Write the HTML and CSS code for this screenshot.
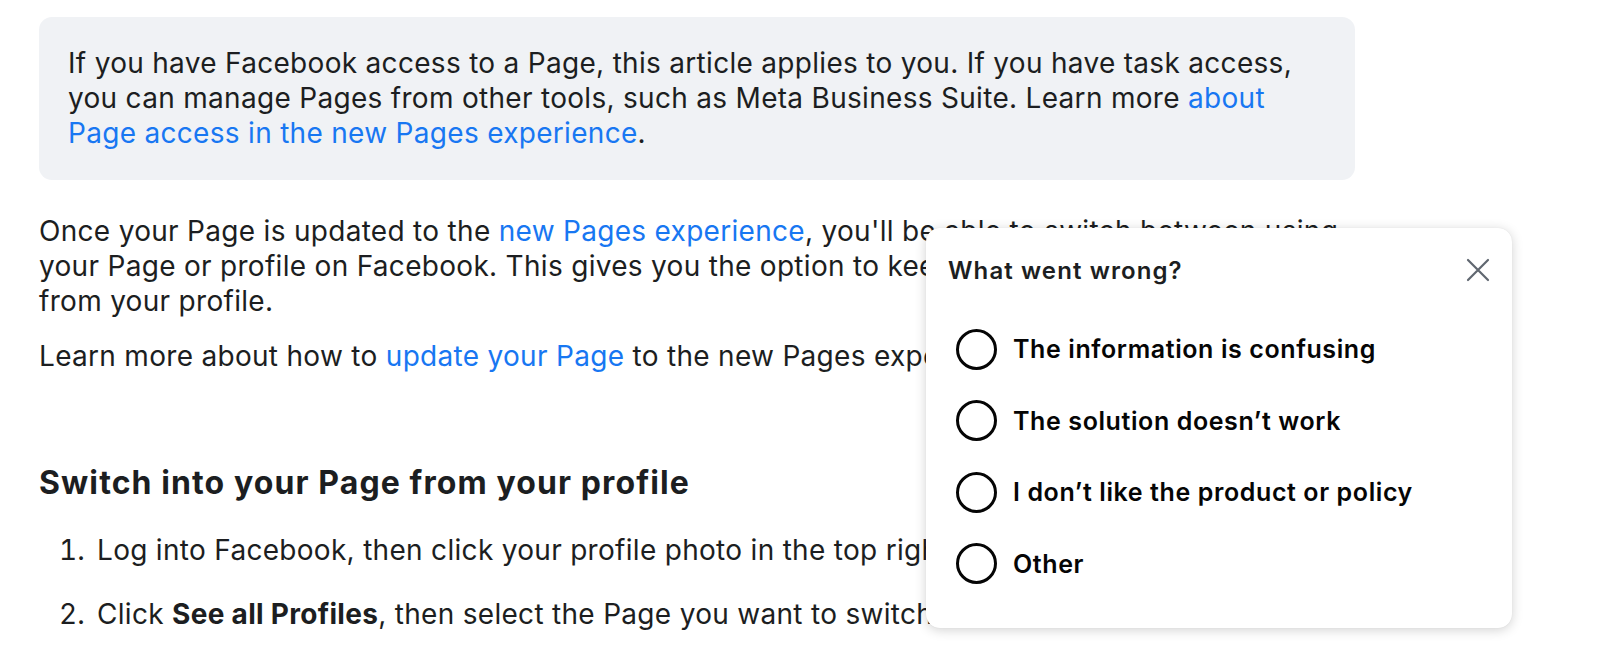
FILE: index.html
```html
<!DOCTYPE html>
<html>
<head>
<meta charset="utf-8">
<link rel="stylesheet" href="styles.css">
</head>
<body>
<main class="article">
  <div class="note">
    <p>If you have Facebook access to a Page, this article applies to you. If you have task access, you can manage Pages from other tools, such as Meta Business Suite. Learn more <a href="#">about Page access in the new Pages experience</a>.</p>
  </div>
  <p class="para">Once your Page is updated to the <a href="#">new Pages experience</a>, you'll be able to switch between using your Page or profile on Facebook. This gives you the option to keep your Page activity separate from your profile.</p>
  <p class="para">Learn more about how to <a href="#">update your Page</a> to the new Pages experience.</p>
  <h2 class="heading">Switch into your Page from your profile</h2>
  <ol class="steps">
    <li>Log into Facebook, then click your profile photo in the top right.</li>
    <li>Click <b>See all Profiles</b>, then select the Page you want to switch into.</li>
  </ol>
</main>
<div class="popup">
  <div class="popup-head">
    <span class="popup-title">What went wrong?</span>
    <svg class="close" width="26" height="26" viewBox="0 0 26 26"><path d="M3 3L23 23M23 3L3 23" stroke="#606770" stroke-width="2.2" stroke-linecap="round" fill="none"/></svg>
  </div>
  <ul class="options">
    <li class="option"><span class="radio"></span>The information is confusing</li>
    <li class="option"><span class="radio"></span>The solution doesn’t work</li>
    <li class="option"><span class="radio"></span>I don’t like the product or policy</li>
    <li class="option"><span class="radio"></span>Other</li>
  </ul>
</div>
</body>
</html>
```
FILE: styles.css
```css
html, body {
  margin: 0;
  padding: 0;
  background: #fff;
  overflow: hidden;
}
body {
  font-family: Inter, "Liberation Sans", sans-serif;
  color: #1c1e21;
  width: 1600px;
  height: 657px;
  position: relative;
}
a {
  color: #1877f2;
  text-decoration: none;
}
.article {
  width: 1316px;
  padding: 17px 0 0 39px;
}
.note {
  background: #f0f2f5;
  border-radius: 13px;
  padding: 29px 29px 29px 29px;
}
.note p,
.para,
.steps {
  font-size: 28px;
  line-height: 35px;
  letter-spacing: 0.3px;
}
.note p {
  margin: 0;
}
.para {
  margin: 34px 0 0 0;
}
.para + .para {
  margin-top: 20px;
}
.heading {
  font-size: 32px;
  font-weight: 700;
  line-height: 40px;
  letter-spacing: 1.1px;
  margin: 89px 0 0 0;
}
.steps {
  margin: 30px 0 0 0;
  padding-left: 54px;
}
.steps li {
  margin-bottom: 29px;
  padding-left: 4px;
}
.steps b {
  font-weight: 700;
}
.popup {
  position: absolute;
  left: 926px;
  top: 228px;
  width: 586px;
  height: 400px;
  background: #fff;
  border-radius: 14px;
  box-shadow: 0 2px 12px rgba(0,0,0,0.18), 0 0 1px rgba(0,0,0,0.1);
  box-sizing: border-box;
  padding: 26px 21px 0 22px;
}
.popup-head {
  display: flex;
  align-items: center;
  justify-content: space-between;
  height: 32px;
}
.popup-title {
  font-size: 24px;
  font-weight: 600;
  letter-spacing: 1.1px;
  color: #1c1e21;
}
.options {
  list-style: none;
  margin: 43px 0 0 0;
  padding: 0;
}
.option {
  display: flex;
  align-items: center;
  gap: 16px;
  height: 40px;
  margin-bottom: 31.5px;
  font-size: 25px;
  font-weight: 600;
  letter-spacing: 0.6px;
  color: #050505;
  padding-left: 8px;
}
.radio {
  width: 35px;
  height: 35px;
  border: 3px solid #050505;
  border-radius: 50%;
  flex: none;
}
```
